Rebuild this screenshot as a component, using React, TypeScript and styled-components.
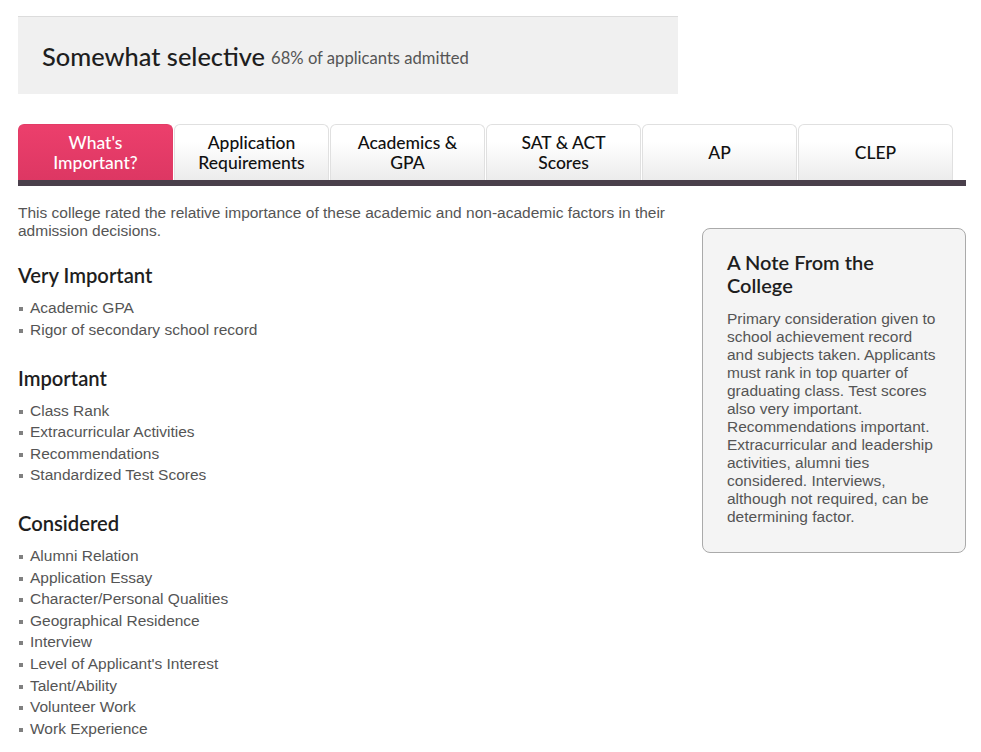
import React from "react";
import styled, { createGlobalStyle } from "styled-components";

const Global = createGlobalStyle`
  body { margin: 0; background: #fff; font-family: "Liberation Sans", Arial, sans-serif; }
`;

const Page = styled.div`
  padding: 16px 15px 0 18px;
  width: 948px;
`;

const Header = styled.div`
  width: 660px;
  height: 78px;
  box-sizing: border-box;
  background: #f0f0f0;
  border-top: 1px solid #dcdcdc;
  display: flex;
  align-items: center;
  padding: 0 24px 0 24px;
  font-family: Lato, "Open Sans", sans-serif;
`;

const Title = styled.span`
  font-size: 25.4px;
  color: #1e1e1e;
  font-weight: 500;
`;

const Sub = styled.span`
  font-size: 16.6px;
  color: #555;
  margin-left: 6px;
  margin-top: 4px;
`;

const TabBar = styled.div`
  margin-top: 30px;
  display: flex;
  gap: 1px;
  border-bottom: 6px solid #4a3f4b;
`;

const Tab = styled.div<{ $active?: boolean }>`
  width: 155px;
  height: 56px;
  box-sizing: border-box;
  border-radius: 6px 6px 0 0;
  border: 1px solid ${(p) => (p.$active ? "#e23c66" : "#e0e0e0")};
  border-bottom: none;
  background: ${(p) =>
    p.$active
      ? "linear-gradient(#ec3f6c, #dd3763)"
      : "linear-gradient(#ffffff 30%, #ececec)"};
  color: ${(p) => (p.$active ? "#fff" : "#111")};
  display: flex;
  align-items: center;
  justify-content: center;
  text-align: center;
  font-family: Lato, "Open Sans", sans-serif;
  font-size: 17.5px;
  line-height: 20px;
  font-weight: 500;
`;

const Body = styled.div`
  display: flex;
  gap: 22px;
  margin-top: 18px;
  align-items: flex-start;
`;

const Main = styled.div`
  width: 662px;
`;

const Intro = styled.p`
  margin: 0;
  font-size: 15.5px;
  line-height: 18px;
  color: #555;
`;

const Section = styled.section<{ $first?: boolean }>`
  margin-top: ${(p) => (p.$first ? "23px" : "25.5px")};
`;

const SectionTitle = styled.h3`
  margin: 0 0 10px;
  font-family: Lato, "Open Sans", sans-serif;
  font-size: 20.2px;
  line-height: 24px;
  font-weight: 600;
  color: #1e1e1e;
`;

const List = styled.ul`
  list-style: none;
  margin: 0;
  padding: 0;
`;

const Item = styled.li`
  position: relative;
  padding-left: 12px;
  font-size: 15.5px;
  line-height: 21.55px;
  color: #555;
  &::before {
    content: "";
    position: absolute;
    left: 1px;
    top: 10px;
    width: 4px;
    height: 4px;
    background: #808080;
  }
`;

const Note = styled.div`
  margin-top: 24px;
  width: 264px;
  box-sizing: border-box;
  background: #f4f4f4;
  border: 1px solid #aaa;
  border-radius: 8px;
  padding: 22px 24px 26px 24px;
`;

const NoteTitle = styled.h4`
  margin: 0 0 13px;
  font-family: Lato, "Open Sans", sans-serif;
  font-size: 20px;
  line-height: 23px;
  font-weight: 600;
  color: #1e1e1e;
`;

const NoteText = styled.p`
  margin: 0;
  font-size: 15.5px;
  line-height: 18px;
  color: #555;
`;

const tabs = [
  "What's\nImportant?",
  "Application\nRequirements",
  "Academics &\nGPA",
  "SAT & ACT\nScores",
  "AP",
  "CLEP",
];

const sections: { title: string; items: string[] }[] = [
  { title: "Very Important", items: ["Academic GPA", "Rigor of secondary school record"] },
  {
    title: "Important",
    items: ["Class Rank", "Extracurricular Activities", "Recommendations", "Standardized Test Scores"],
  },
  {
    title: "Considered",
    items: [
      "Alumni Relation",
      "Application Essay",
      "Character/Personal Qualities",
      "Geographical Residence",
      "Interview",
      "Level of Applicant's Interest",
      "Talent/Ability",
      "Volunteer Work",
      "Work Experience",
    ],
  },
];

export default function App() {
  return (
    <Page>
      <Global />
      <Header>
        <Title>Somewhat selective</Title>
        <Sub>68% of applicants admitted</Sub>
      </Header>
      <TabBar>
        {tabs.map((t, i) => (
          <Tab key={t} $active={i === 0}>
            <span>
              {t.split("\n").map((l, j) => (
                <React.Fragment key={j}>
                  {j > 0 && <br />}
                  {l}
                </React.Fragment>
              ))}
            </span>
          </Tab>
        ))}
      </TabBar>
      <Body>
        <Main>
          <Intro>
            This college rated the relative importance of these academic and non-academic factors in their
            admission decisions.
          </Intro>
          {sections.map((s, i) => (
            <Section key={s.title} $first={i === 0}>
              <SectionTitle>{s.title}</SectionTitle>
              <List>
                {s.items.map((it) => (
                  <Item key={it}>{it}</Item>
                ))}
              </List>
            </Section>
          ))}
        </Main>
        <Note>
          <NoteTitle>A Note From the College</NoteTitle>
          <NoteText>
            Primary consideration given to school achievement record and subjects taken. Applicants must rank in
            top quarter of graduating class. Test scores also very important. Recommendations important.
            Extracurricular and leadership activities, alumni ties considered. Interviews, although not required,
            can be determining factor.
          </NoteText>
        </Note>
      </Body>
    </Page>
  );
}
